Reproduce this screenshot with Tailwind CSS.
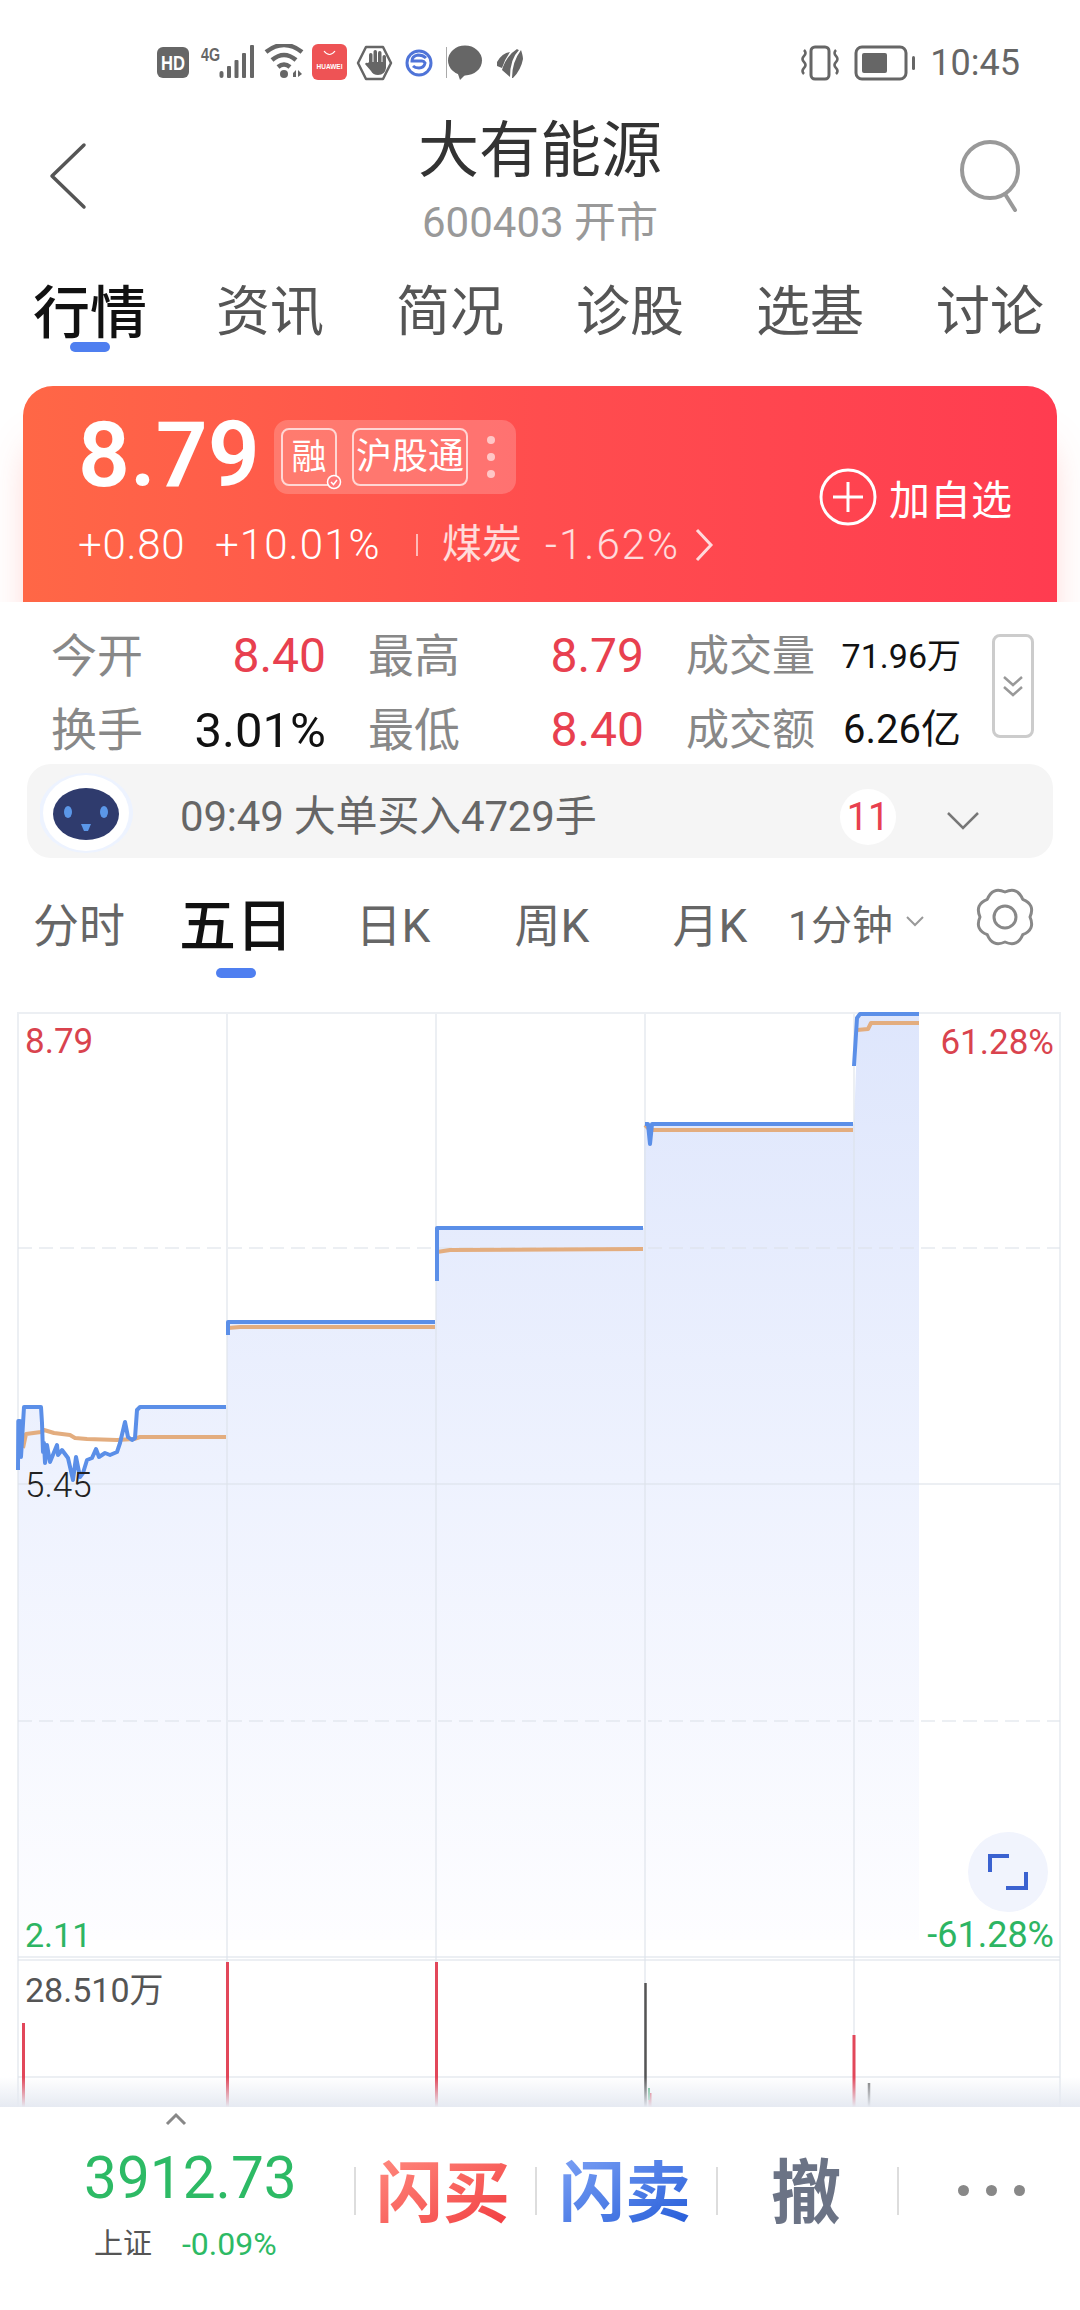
<!DOCTYPE html>
<html lang="zh-CN">
<head>
<meta charset="utf-8">
<script src="https://cdn.jsdelivr.net/npm/@tailwindcss/browser@4"></script>
</head>
<body class="bg-white">
<div class="relative w-[1080px] h-[2310px] overflow-hidden bg-white font-['Roboto','Noto_Sans_CJK_SC',sans-serif]">

  <!-- status bar -->
  <div class="relative h-[90px] flex items-start pt-[44px] pl-[157px] pr-[60px] justify-between">
    <svg width="370" height="38" viewBox="157 44 370 38" class="shrink-0">
      <rect x="157" y="47" width="32" height="31" rx="6" fill="#666"/>
      <text x="173" y="70" font-family="Liberation Sans" font-weight="700" font-size="21" fill="#fff" text-anchor="middle" textLength="24" lengthAdjust="spacingAndGlyphs">HD</text>
      <text x="201" y="61" font-family="Liberation Sans" font-weight="700" font-size="19" fill="#666" textLength="19" lengthAdjust="spacingAndGlyphs">4G</text>
      <g fill="#666"><rect x="219.500" y="71" width="4" height="7" rx="2"/><rect x="227" y="66" width="4" height="12" rx="1"/><rect x="234.500" y="60" width="4" height="18" rx="1"/><rect x="242" y="53" width="4" height="25" rx="1"/><rect x="250" y="45" width="4" height="33" rx="1"/></g>
      <g fill="none" stroke="#666" stroke-width="4.500"><path d="M266 52 Q284 38 302 52"/><path d="M272 60 Q284 50 296 60"/><path d="M278 67 Q284 62 290 67"/></g>
      <circle cx="284" cy="74" r="4" fill="#666"/>
      <path d="M293 77v-4l3-3v7zM298 70l4 4-4 3z" fill="#666"/>
      <rect x="312" y="44" width="35" height="36" rx="6" fill="#ee5355"/>
      <path d="M324 51q5.500 7 11 0" fill="none" stroke="#fff" stroke-width="1.200"/>
      <text x="329.500" y="69" font-family="Liberation Sans" font-weight="700" font-size="6.500" fill="#fff" text-anchor="middle">HUAWEI</text>
      <path d="M366 47h17l8 16-8 16h-17l-8-16z" fill="none" stroke="#666" stroke-width="2.500" stroke-linejoin="round"/>
      <g fill="#666"><rect x="369" y="53" width="3.500" height="14" rx="1.700"/><rect x="373.500" y="50" width="3.500" height="16" rx="1.700"/><rect x="378" y="51" width="3.500" height="16" rx="1.700"/><rect x="382.500" y="55" width="3.500" height="13" rx="1.700"/><path d="M369 62h17v6q-1 7-8 7-5 0-7-4l-6-7q1-2 3-1z"/></g>
      <circle cx="419" cy="63" r="12" fill="none" stroke="#4f74d8" stroke-width="3"/>
      <path d="M426 58q-3-3-8-3-6 1-6 6h10q2 0 3 2-1 5-6 5-4 0-6-2" fill="none" stroke="#4f74d8" stroke-width="3"/>
      <rect x="446" y="47" width="1" height="31" fill="#aaa"/>
      <ellipse cx="465" cy="60.500" rx="17" ry="15" fill="#666"/>
      <path d="M457 71l3 9 8-8z" fill="#666"/>
      <path d="M497 62q5-9 13-10-5 7-8 16l-5-2zM502 70q4-14 15-21 1 1 2 1-9 9-9 27zM512 78q0-16 9-28 2 6 2 9-2 11-10 19z" fill="#666"/>
    </svg>
    <div class="flex items-center gap-[13px] h-[38px]">
      <svg width="40" height="36" viewBox="0 0 40 36"><rect x="11" y="2" width="18" height="32" rx="4" fill="none" stroke="#666" stroke-width="3"/><path d="M4 5q3 3 0 6t0 6q3 3 0 6t0 6M36 5q-3 3 0 6t0 6q-3 3 0 6t0 6" fill="none" stroke="#666" stroke-width="2.500"/></svg>
      <svg width="62" height="36" viewBox="0 0 62 36" class="ml-[1px]"><rect x="2" y="2" width="50" height="32" rx="6" fill="none" stroke="#666" stroke-width="3"/><rect x="8" y="8" width="25" height="20" rx="2" fill="#666"/><rect x="58" y="11" width="3" height="14" rx="1.500" fill="#666"/></svg>
      <span class="ml-[1px] text-[36px] leading-none text-[#666]">10:45</span>
    </div>
  </div>

  <!-- title -->
  <div class="relative h-[170px]">
    <svg class="absolute left-[48px] top-[52px]" width="40" height="70" viewBox="0 0 40 70"><path d="M36 3 4 34l32 31" fill="none" stroke="#555" stroke-width="3.500" stroke-linecap="round" stroke-linejoin="round"/></svg>
    <svg class="absolute left-[955px] top-[48px]" width="70" height="74" viewBox="0 0 70 74"><circle cx="35" cy="32" r="28" fill="none" stroke="#999" stroke-width="4"/><path d="M50 56l10 16" stroke="#999" stroke-width="4" stroke-linecap="round"/></svg>
    <div class="flex flex-col items-center">
      <div class="h-[122px] flex items-center text-[61px] leading-none text-[#333]">大有能源</div>
      <div class="h-[18px] flex items-center text-[42px] leading-none text-[#999] mt-[2px] whitespace-nowrap">600403 开市</div>
    </div>
  </div>

  <!-- tabs -->
  <div class="h-[126px] flex">
    <div class="flex-1 flex flex-col items-center pt-[24px]"><span class="h-[58px] flex items-center text-[57px] leading-none font-medium text-[#111]">行情</span><span class="w-[40px] h-[10px] rounded-[5px] bg-[#4f7ff0]"></span></div>
    <div class="flex-1 flex justify-center pt-[24px]"><span class="h-[58px] flex items-center text-[54px] leading-none text-[#555]">资讯</span></div>
    <div class="flex-1 flex justify-center pt-[24px]"><span class="h-[58px] flex items-center text-[54px] leading-none text-[#555]">简况</span></div>
    <div class="flex-1 flex justify-center pt-[24px]"><span class="h-[58px] flex items-center text-[54px] leading-none text-[#555]">诊股</span></div>
    <div class="flex-1 flex justify-center pt-[24px]"><span class="h-[58px] flex items-center text-[54px] leading-none text-[#555]">选基</span></div>
    <div class="flex-1 flex justify-center pt-[24px]"><span class="h-[58px] flex items-center text-[54px] leading-none text-[#555]">讨论</span></div>
  </div>

  <!-- quote card -->
  <div class="relative mx-[23px] h-[216px] rounded-t-[30px] bg-linear-to-r from-[#ff6746] via-[#ff4d4e] to-[#ff3c50] shadow-[0_50px_40px_-10px_rgba(255,90,80,0.35)] text-white">
    <div class="absolute left-[55px] top-[14px] text-[91px] leading-[110px] font-semibold">8.79</div>
    <div class="absolute left-[251px] top-[34px] w-[242px] h-[74px] rounded-[14px] bg-white/20 flex items-center pl-[7px]">
      <div class="relative w-[56px] h-[58px] rounded-[8px] border-2 border-white/70 flex items-center justify-center text-[35px] leading-none">融
        <svg class="absolute -right-[7px] -bottom-[6px]" width="16" height="16" viewBox="0 0 16 16"><circle cx="8" cy="8" r="6.500" fill="#ff7777" stroke="#fff" stroke-width="1.500"/><path d="M5 8l2.500 2.500L11 6" fill="none" stroke="#fff" stroke-width="1.500"/></svg>
      </div>
      <div class="ml-[15px] w-[116px] h-[58px] rounded-[8px] border-2 border-white/70 flex items-center justify-center text-[36px] leading-none whitespace-nowrap">沪股通</div>
      <div class="ml-[19px] flex flex-col gap-[9px]"><span class="w-[8px] h-[8px] rounded-full bg-white/60"></span><span class="w-[8px] h-[8px] rounded-full bg-white/60"></span><span class="w-[8px] h-[8px] rounded-full bg-white/60"></span></div>
    </div>
    <div class="absolute left-[55px] top-[135px] h-[48px] flex items-center text-[42px] leading-none whitespace-nowrap">
      <span class="w-[106px] font-light tracking-[0.7px]">+0.80</span>
      <span class="ml-[31px] w-[165px] font-light tracking-[1.100px]">+10.01%</span>
      <span class="ml-[36px] w-[2px] h-[22px] bg-white/60"></span>
      <span class="ml-[24px] w-[80px] text-[40px] text-white/80">煤炭</span>
      <span class="ml-[23px] w-[135px] text-white/80 font-light tracking-[2px]">-1.62%</span>
      <svg class="ml-[14px]" width="20" height="34" viewBox="0 0 20 34"><path d="M3 2l14 15L3 32" fill="none" stroke="#fff" stroke-opacity=".8" stroke-width="3"/></svg>
    </div>
    <div class="absolute left-[795px] top-[81px] h-[60px] flex items-center">
      <svg width="60" height="60" viewBox="0 0 60 60"><circle cx="30" cy="30" r="27" fill="none" stroke="#fff" stroke-width="3"/><path d="M15 30h30M30 15v30" stroke="#fff" stroke-width="3"/></svg>
      <span class="ml-[11px] mt-[8px] text-[41px] leading-none whitespace-nowrap">加自选</span>
    </div>
  </div>

  <!-- stats -->
  <div class="relative bg-white h-[162px] pl-[51px] pt-[17px]">
    <div class="grid grid-cols-[275px_276px_275px] gap-x-[42px] auto-rows-[74px] w-[910px] text-[#888]">
      <div class="flex items-center justify-between"><span class="text-[46px] leading-none">今开</span><span class="text-[48px] leading-none text-[#e8404f]">8.40</span></div>
      <div class="flex items-center justify-between"><span class="text-[46px] leading-none">最高</span><span class="text-[48px] leading-none text-[#e8404f]">8.79</span></div>
      <div class="flex items-center justify-between"><span class="text-[43px] leading-none">成交量</span><span class="text-[34px] leading-none text-[#111]">71.96万</span></div>
      <div class="flex items-center justify-between"><span class="text-[46px] leading-none">换手</span><span class="text-[49px] leading-none text-[#111]">3.01%</span></div>
      <div class="flex items-center justify-between"><span class="text-[46px] leading-none">最低</span><span class="text-[48px] leading-none text-[#e8404f]">8.40</span></div>
      <div class="flex items-center justify-between"><span class="text-[43px] leading-none">成交额</span><span class="text-[40px] leading-none text-[#111]">6.26亿</span></div>
    </div>
    <div class="absolute left-[992px] top-[32px] w-[42px] h-[104px] rounded-[8px] border-[3px] border-[#ccc] flex items-center justify-center">
      <svg width="22" height="22" viewBox="0 0 22 22"><path d="M2 2l9 8 9-8M2 12l9 8 9-8" fill="none" stroke="#999" stroke-width="2.500"/></svg>
    </div>
  </div>

  <!-- notification -->
  <div class="relative mx-[27px] h-[94px] rounded-[24px] bg-[#f5f5f5] flex items-center">
    <svg class="absolute left-[13px] top-[8px]" width="94" height="82" viewBox="0 0 94 82">
      <ellipse cx="46" cy="41" rx="47" ry="40" fill="#edf3ff"/>
      <ellipse cx="46" cy="41" rx="43" ry="38" fill="#fff"/>
      <ellipse cx="46" cy="42" rx="33" ry="26" fill="#2f3b6d"/>
      <ellipse cx="28" cy="40" rx="4" ry="6" fill="#5b97e8"/><ellipse cx="64" cy="40" rx="4" ry="6" fill="#5b97e8"/>
      <path d="M41 52h10l-3 7h-4z" fill="#5b97e8"/>
    </svg>
    <span class="ml-[153px] mt-[11px] text-[42px] leading-none text-[#666] whitespace-nowrap tracking-[-0.2px]">09:49 大单买入4729手</span>
    <div class="absolute left-[813px] top-[25px] w-[56px] h-[56px] rounded-full bg-white flex items-center justify-center text-[38px] leading-none text-[#e8404f]">11</div>
    <svg class="absolute left-[919px] top-[47px]" width="34" height="20" viewBox="0 0 34 20"><path d="M2 2l15 15L32 2" fill="none" stroke="#777" stroke-width="2.500"/></svg>
  </div>

  <!-- period tabs -->
  <div class="relative h-[154px]">
    <div class="grid grid-cols-[158px_156px_158px_160px_156px_1fr] h-[126px] items-center text-[#666] pt-[10px]">
      <span class="text-center text-[46px] leading-none">分时</span>
      <span class="text-center text-[57px] leading-none font-medium text-[#111] whitespace-nowrap">五日</span>
      <span class="text-center text-[46px] leading-none">日K</span>
      <span class="text-center text-[46px] leading-none">周K</span>
      <span class="text-center text-[46px] leading-none">月K</span>
      <span class="text-[41px] leading-none whitespace-nowrap flex items-center">1分钟<svg class="ml-[12px] -mt-[10px]" width="20" height="12" viewBox="0 0 20 12"><path d="M2 2l8 8 8-8" fill="none" stroke="#999" stroke-width="2"/></svg></span>
    </div>
    <span class="absolute left-[216px] top-[110px] w-[40px] h-[10px] rounded-[5px] bg-[#4f7ff0]"></span>
    <svg class="absolute left-[975px] top-[29px]" width="60" height="60" viewBox="0 0 60 60"><path d="M55 30Q60.500 42.600 47.680 47.680Q42.600 60.500 30 55Q17.400 60.500 12.320 47.680Q-0.500 42.600 5 30Q-0.500 17.400 12.320 12.320Q17.400 -0.500 30 5Q42.600 -0.500 47.680 12.320Q60.500 17.400 55 30Z" fill="none" stroke="#888" stroke-width="3" stroke-linejoin="round"/><circle cx="30" cy="30" r="11" fill="none" stroke="#888" stroke-width="3"/></svg>
  </div>

  <!-- chart -->
  <div class="relative h-[1095px]">
    <svg class="block" width="1080" height="1095" viewBox="0 1012 1080 1095">
      <defs>
        <linearGradient id="fillG" gradientUnits="userSpaceOnUse" x1="0" y1="1012" x2="0" y2="1940"><stop offset="0" stop-color="#dee6fc"/><stop offset="0.500" stop-color="#eef2fe"/><stop offset="1" stop-color="#fdfdff"/></linearGradient>
        <linearGradient id="fadeG" x1="0" y1="0" x2="0" y2="1"><stop offset="0" stop-color="#e6eaf2" stop-opacity="0"/><stop offset="1" stop-color="#e6eaf2"/></linearGradient>
      </defs>
      <path d="M18 1470 L18.300 1421 L20 1421 L21 1457 L24 1407 L41 1407 L42 1423 L43 1452 L44 1443 L45 1463 L47 1445 L50 1462 L57 1445 L58 1455 L62 1450 L68 1458 L73 1480 L76 1457 L80 1477 L83 1473 L87 1460 L92 1458 L96 1449 L99 1457 L105 1453 L110 1455 L117 1452 L120 1443 L125 1422 L128 1437 L132 1440 L135 1438 L137 1410 L140 1407 L227 1407 L227 1322 L436 1322 L436 1228 L644 1228 L644 1124 L854 1124 L858 1014 L919 1014 L919 1940 L18 1940Z" fill="url(#fillG)"/>
      <!-- grid -->
      <g fill="none" stroke="#dde1ea" stroke-opacity="0.550" stroke-width="2">
        <path d="M18 1013H1060M18 1012V2107M227 1012V2107M436 1012V2107M645 1012V2107M854 1012V2107M1060 1012V2107"/>
        <path d="M18 1484H1060M18 1957H1060M18 1960H1060M18 2077H1060"/>
        <path d="M18 1248H1060M18 1721H1060" stroke-dasharray="14 7"/>
      </g>
      <!-- lines -->
      <g fill="none" stroke-linejoin="round" stroke-width="4">
        <path stroke="#e3ad7f" d="M23 1448 L26 1434 L41 1432 L44 1430 L54 1433 L70 1435 L75 1438 L87 1439 L117 1440 L134 1439 L140 1437 L226 1437"/>
        <path stroke="#e3ad7f" d="M228 1328 L240 1327 L435 1327"/>
        <path stroke="#e3ad7f" d="M437 1252 L450 1250 L643 1249"/>
        <path stroke="#e3ad7f" d="M645 1125 L650 1130 L853 1130"/>
        <path stroke="#e3ad7f" d="M857 1030 L868 1029 L871 1023 L919 1023"/>
        <path stroke="#5b8fe8" d="M18 1470 L18.300 1421 L20 1421 L21 1457 L24 1407 L41 1407 L42 1423 L43 1452 L44 1443 L45 1463 L47 1445 L50 1462 L57 1445 L58 1455 L62 1450 L68 1458 L73 1480 L76 1457 L80 1477 L83 1473 L87 1460 L92 1458 L96 1449 L99 1457 L105 1453 L110 1455 L117 1452 L120 1443 L125 1422 L128 1437 L132 1440 L135 1438 L137 1410 L140 1407 L226 1407"/>
        <path stroke="#5b8fe8" d="M228 1335 L228 1322 L435 1322"/>
        <path stroke="#5b8fe8" d="M437 1281 L437 1228 L643 1228"/>
        <path stroke="#5b8fe8" d="M645 1124 L648 1124 L650 1144 L652 1124 L853 1124"/>
        <path stroke="#5b8fe8" d="M854 1066 L857 1018 L860 1014 L919 1014"/>
      </g>
      <!-- volume -->
      <g stroke-width="3">
        <path stroke="#e2475a" d="M23.500 2023V2107M227.500 1962V2107M436.500 1962V2107M854 2035V2107M650 2093V2107"/>
        <path stroke="#555" stroke-width="2.500" d="M645.500 1983V2107"/>
        <path stroke="#777" stroke-width="2.500" d="M869 2083V2107"/>
        <path stroke="#58b884" stroke-width="2" d="M649 2088V2100"/>
      </g>
      <rect x="0" y="2077" width="1080" height="30" fill="url(#fadeG)"/>
    </svg>
    <span class="absolute left-[25px] top-[15px] text-[35px] leading-[30px] text-[#d9434e]">8.79</span>
    <span class="absolute right-[26px] top-[16px] text-[35px] leading-[30px] text-[#d9434e]">61.28%</span>
    <span class="absolute left-[25px] top-[459px] text-[35px] leading-[30px] font-light text-[#222]">5.45</span>
    <span class="absolute left-[25px] top-[908px] text-[34px] leading-[30px] text-[#2db563]">2.11</span>
    <span class="absolute right-[26px] top-[908px] text-[36px] leading-[30px] text-[#2db563]">-61.28%</span>
    <span class="absolute left-[25px] top-[963px] text-[34px] leading-[30px] text-[#555]">28.510万</span>
    <div class="absolute left-[968px] top-[820px] w-[80px] h-[80px] rounded-full bg-[#f1f4fd] flex items-center justify-center">
      <svg width="40" height="36" viewBox="0 0 40 36"><path d="M2 18V2h19M38 18v16H18" fill="none" stroke="#3b62d0" stroke-width="4"/></svg>
    </div>
  </div>

  <!-- footer -->
  <div class="relative h-[203px] bg-white">
    <svg class="absolute left-[165px] top-[5px]" width="22" height="14" viewBox="0 0 22 14"><path d="M2 12l9-9 9 9" fill="none" stroke="#888" stroke-width="3"/></svg>
    <div class="absolute left-[84px] top-[36px] text-[58.500px] leading-[70px] text-[#2dba65]">3912.73</div>
    <div class="absolute left-[94px] top-[120px] h-[34px] flex items-center">
      <span class="text-[29px] leading-none text-[#555]">上证</span>
      <span class="ml-[30px] text-[32px] leading-none text-[#2dba65]">-0.09%</span>
    </div>
    <div class="absolute left-[354px] top-[60px] w-[2px] h-[48px] bg-[#ddd]"></div>
    <div class="absolute left-[535px] top-[60px] w-[2px] h-[48px] bg-[#ddd]"></div>
    <div class="absolute left-[716px] top-[60px] w-[2px] h-[48px] bg-[#ddd]"></div>
    <div class="absolute left-[897px] top-[60px] w-[2px] h-[48px] bg-[#ddd]"></div>
    <div class="absolute left-[376px] top-[47px] text-[67px] leading-[80px] font-bold whitespace-nowrap bg-linear-to-br from-[#ff8a80] to-[#f0323c] bg-clip-text text-transparent">闪买</div>
    <div class="absolute left-[559px] top-[47px] text-[66px] leading-[80px] font-bold whitespace-nowrap bg-linear-to-br from-[#7ea2f5] to-[#1f57d6] bg-clip-text text-transparent">闪卖</div>
    <div class="absolute left-[771px] top-[47px] text-[70px] leading-[80px] font-bold text-[#6b7385]">撤</div>
    <div class="absolute left-[958px] top-[78px] flex gap-[17px]"><span class="w-[11px] h-[11px] rounded-full bg-[#888]"></span><span class="w-[11px] h-[11px] rounded-full bg-[#888]"></span><span class="w-[11px] h-[11px] rounded-full bg-[#888]"></span></div>
  </div>
</div>
</body>
</html>
